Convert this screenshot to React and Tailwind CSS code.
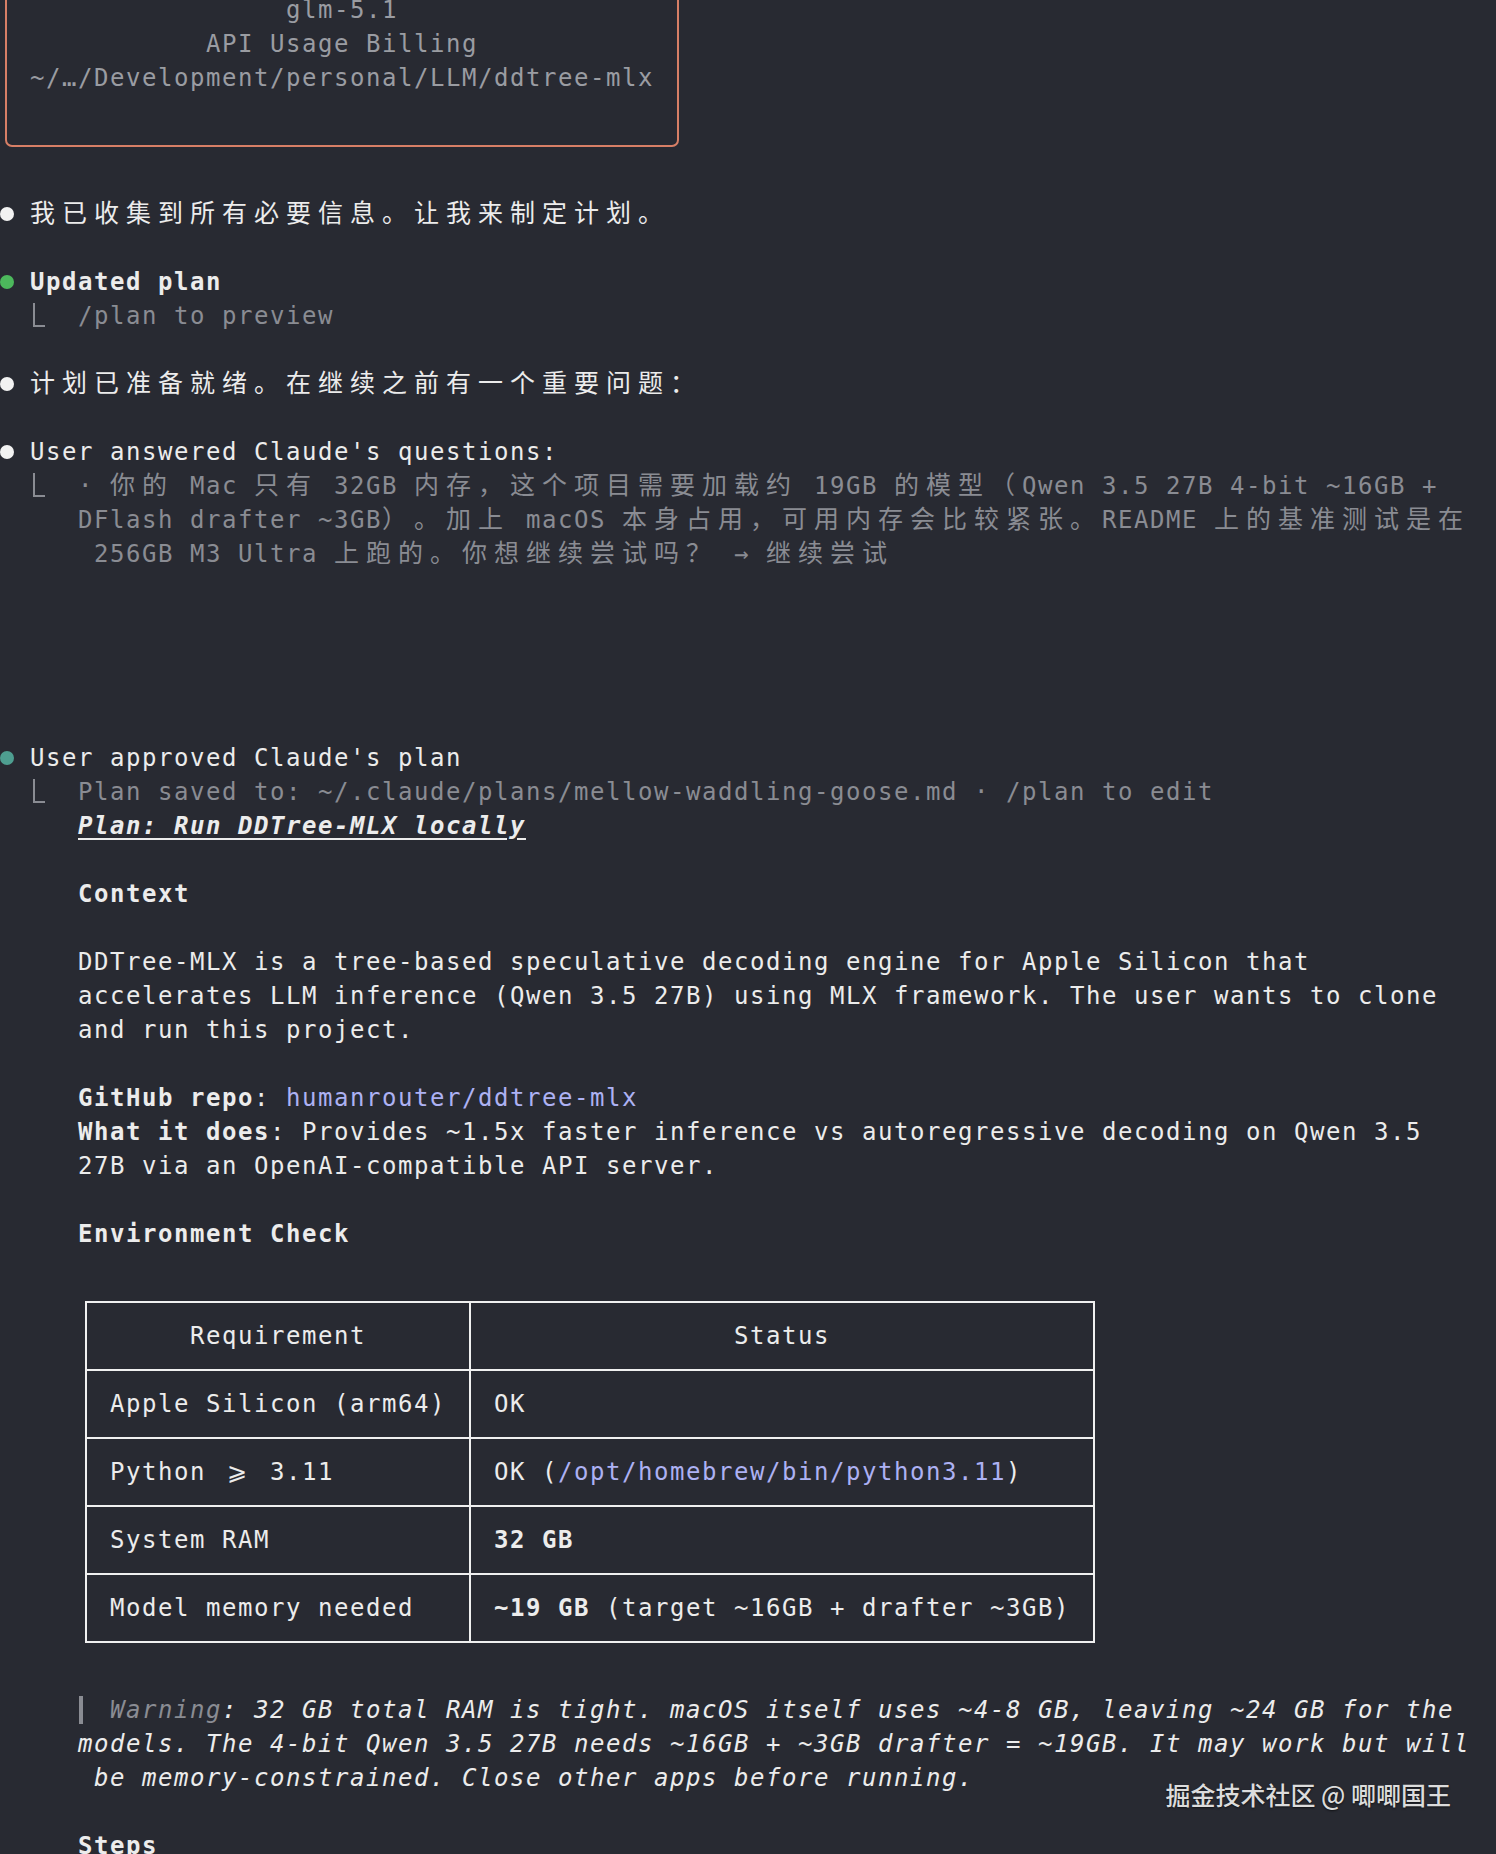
import React from "react";

const WIDE = /[\u2e80-\u9fff\u3000-\u303f\uff00-\uff60]/;

// split text into runs so wide (CJK) chars take two terminal cells
function Cjk({ text }) {
  const runs = [];
  for (const ch of text) {
    const wide = WIDE.test(ch);
    const last = runs[runs.length - 1];
    if (last && last.wide === wide) last.s += ch;
    else runs.push({ s: ch, wide });
  }
  return runs.map((r, i) =>
    r.wide ? (
      <span
        key={i}
        className="font-['Noto_Sans_CJK_SC',sans-serif] text-[25px] leading-none tracking-[7px] [text-spacing-trim:space-all]"
      >
        {r.s}
      </span>
    ) : (
      <React.Fragment key={i}>{r.s}</React.Fragment>
    )
  );
}

function Line({ children, className = "" }) {
  return <div className={`h-[34px] leading-[34px] whitespace-pre ${className}`}>{children}</div>;
}

function Bullet({ color }) {
  return (
    <span className="inline-block w-[32px] h-[34px] align-top">
      <span className={`block mt-[10px] ml-[2px] w-[14px] h-[14px] rounded-full ${color}`} />
    </span>
  );
}

function Elbow() {
  return (
    <span className="inline-block w-[16px] h-[34px] align-top">
      <span className="block mt-[4px] ml-[3px] w-[12px] h-[24px] border-l-2 border-b-2 border-[#8a8c93]" />
    </span>
  );
}

const cell = "bg-[#282a32] h-[66px] leading-[66px] whitespace-pre";

export default function App() {
  return (
    <div className="relative h-[1854px] w-[1496px] overflow-hidden bg-[#282a32] text-[#ececec] font-['DejaVu_Sans_Mono',monospace] text-[24px] tracking-[1.55px]">
      <div className="-mt-[41.5px] -ml-[2px]">
        {/* header box (top cut off) */}
        <div className="py-[16px]">
          <div className="ml-[7px] w-[674px] border-2 border-[#d77f66] rounded-[7px] py-[16px] text-center text-[#9a9ca2]">
            <Line>glm-5.1</Line>
            <Line>API Usage Billing</Line>
            <Line>~/…/Development/personal/LLM/ddtree-mlx</Line>
            <Line> </Line>
          </div>
        </div>
        <Line> </Line>

        <Line>
          <Bullet color="bg-[#f2f2f2]" />
          <Cjk text="我已收集到所有必要信息。让我来制定计划。" />
        </Line>
        <Line> </Line>

        <Line>
          <Bullet color="bg-[#4cb85c]" />
          <span className="font-bold">Updated plan</span>
        </Line>
        <Line className="text-[#8a8c93]">
          {"  "}
          <Elbow />
          {"  /plan to preview"}
        </Line>
        <Line> </Line>

        <Line>
          <Bullet color="bg-[#f2f2f2]" />
          <Cjk text="计划已准备就绪。在继续之前有一个重要问题：" />
        </Line>
        <Line> </Line>

        <Line>
          <Bullet color="bg-[#f2f2f2]" />
          User answered Claude's questions:
        </Line>
        <div className="text-[#8a8c93]">
          <Line>
            {"  "}
            <Elbow />
            <Cjk text="  · 你的 Mac 只有 32GB 内存，这个项目需要加载约 19GB 的模型（Qwen 3.5 27B 4-bit ~16GB +" />
          </Line>
          <Line>
            <Cjk text="     DFlash drafter ~3GB）。加上 macOS 本身占用，可用内存会比较紧张。README 上的基准测试是在" />
          </Line>
          <Line>
            <Cjk text="      256GB M3 Ultra 上跑的。你想继续尝试吗？ → 继续尝试" />
          </Line>
        </div>
        <div className="h-[170px]" />

        <Line>
          <Bullet color="bg-[#4e9e90]" />
          User approved Claude's plan
        </Line>
        <Line className="text-[#8a8c93]">
          {"  "}
          <Elbow />
          {"  Plan saved to: ~/.claude/plans/mellow-waddling-goose.md · /plan to edit"}
        </Line>
        <Line>
          {"     "}
          <span className="font-bold italic underline decoration-2 underline-offset-[4px]">
            Plan: Run DDTree-MLX locally
          </span>
        </Line>
        <Line> </Line>
        <Line>
          {"     "}
          <span className="font-bold">Context</span>
        </Line>
        <Line> </Line>
        <Line>{"     DDTree-MLX is a tree-based speculative decoding engine for Apple Silicon that"}</Line>
        <Line>{"     accelerates LLM inference (Qwen 3.5 27B) using MLX framework. The user wants to clone"}</Line>
        <Line>{"     and run this project."}</Line>
        <Line> </Line>
        <Line>
          {"     "}
          <span className="font-bold">GitHub repo</span>
          {": "}
          <span className="text-[#adb1f3]">humanrouter/ddtree-mlx</span>
        </Line>
        <Line>
          {"     "}
          <span className="font-bold">What it does</span>
          {": Provides ~1.5x faster inference vs autoregressive decoding on Qwen 3.5"}
        </Line>
        <Line>{"     27B via an OpenAI-compatible API server."}</Line>
        <Line> </Line>
        <Line>
          {"     "}
          <span className="font-bold">Environment Check</span>
        </Line>
        <Line> </Line>

        {/* table */}
        <div className="h-[374px] pt-[16px] pl-[87px]">
          <div className="grid w-[1010px] grid-cols-[382px_622px] gap-[2px] p-[2px] bg-[#f0f0f0]">
            <div className={`${cell} text-center`}>Requirement</div>
            <div className={`${cell} text-center`}>Status</div>

            <div className={`${cell} pl-[23px]`}>Apple Silicon (arm64)</div>
            <div className={`${cell} pl-[23px]`}>OK</div>

            <div className={`${cell} pl-[23px]`}>
              {"Python "}
              <span className="inline-block w-[32px] text-center">⩾</span>
              {" 3.11"}
            </div>
            <div className={`${cell} pl-[23px]`}>
              {"OK ("}
              <span className="text-[#adb1f3]">/opt/homebrew/bin/python3.11</span>
              {")"}
            </div>

            <div className={`${cell} pl-[23px]`}>System RAM</div>
            <div className={`${cell} pl-[23px]`}>
              <span className="font-bold">32 GB</span>
            </div>

            <div className={`${cell} pl-[23px]`}>Model memory needed</div>
            <div className={`${cell} pl-[23px]`}>
              <span className="font-bold">~19 GB</span>
              {" (target ~16GB + drafter ~3GB)"}
            </div>
          </div>
        </div>

        <Line> </Line>
        <div className="italic">
          <Line>
            {"     "}
            <span className="inline-block w-[16px] h-[34px] align-top">
              <span className="block mt-[3px] ml-[1px] w-[4px] h-[28px] bg-[#8a8c93]" />
            </span>
            {" "}
            <span className="text-[#8a8c93]">Warning</span>
            {": 32 GB total RAM is tight. macOS itself uses ~4-8 GB, leaving ~24 GB for the"}
          </Line>
          <Line>{"     models. The 4-bit Qwen 3.5 27B needs ~16GB + ~3GB drafter = ~19GB. It may work but will"}</Line>
          <Line>{"      be memory-constrained. Close other apps before running."}</Line>
        </div>
        <Line> </Line>
        <Line>
          {"     "}
          <span className="font-bold">Steps</span>
        </Line>
      </div>

      {/* watermark */}
      <div className="absolute right-[45px] top-[1782px] font-['Noto_Sans_CJK_SC',sans-serif] text-[25px] leading-[25px] tracking-normal font-medium text-[#dcdcdc] [text-shadow:0_1px_2px_rgba(0,0,0,0.6)]">
        掘金技术社区 @ 唧唧国王
      </div>
    </div>
  );
}
